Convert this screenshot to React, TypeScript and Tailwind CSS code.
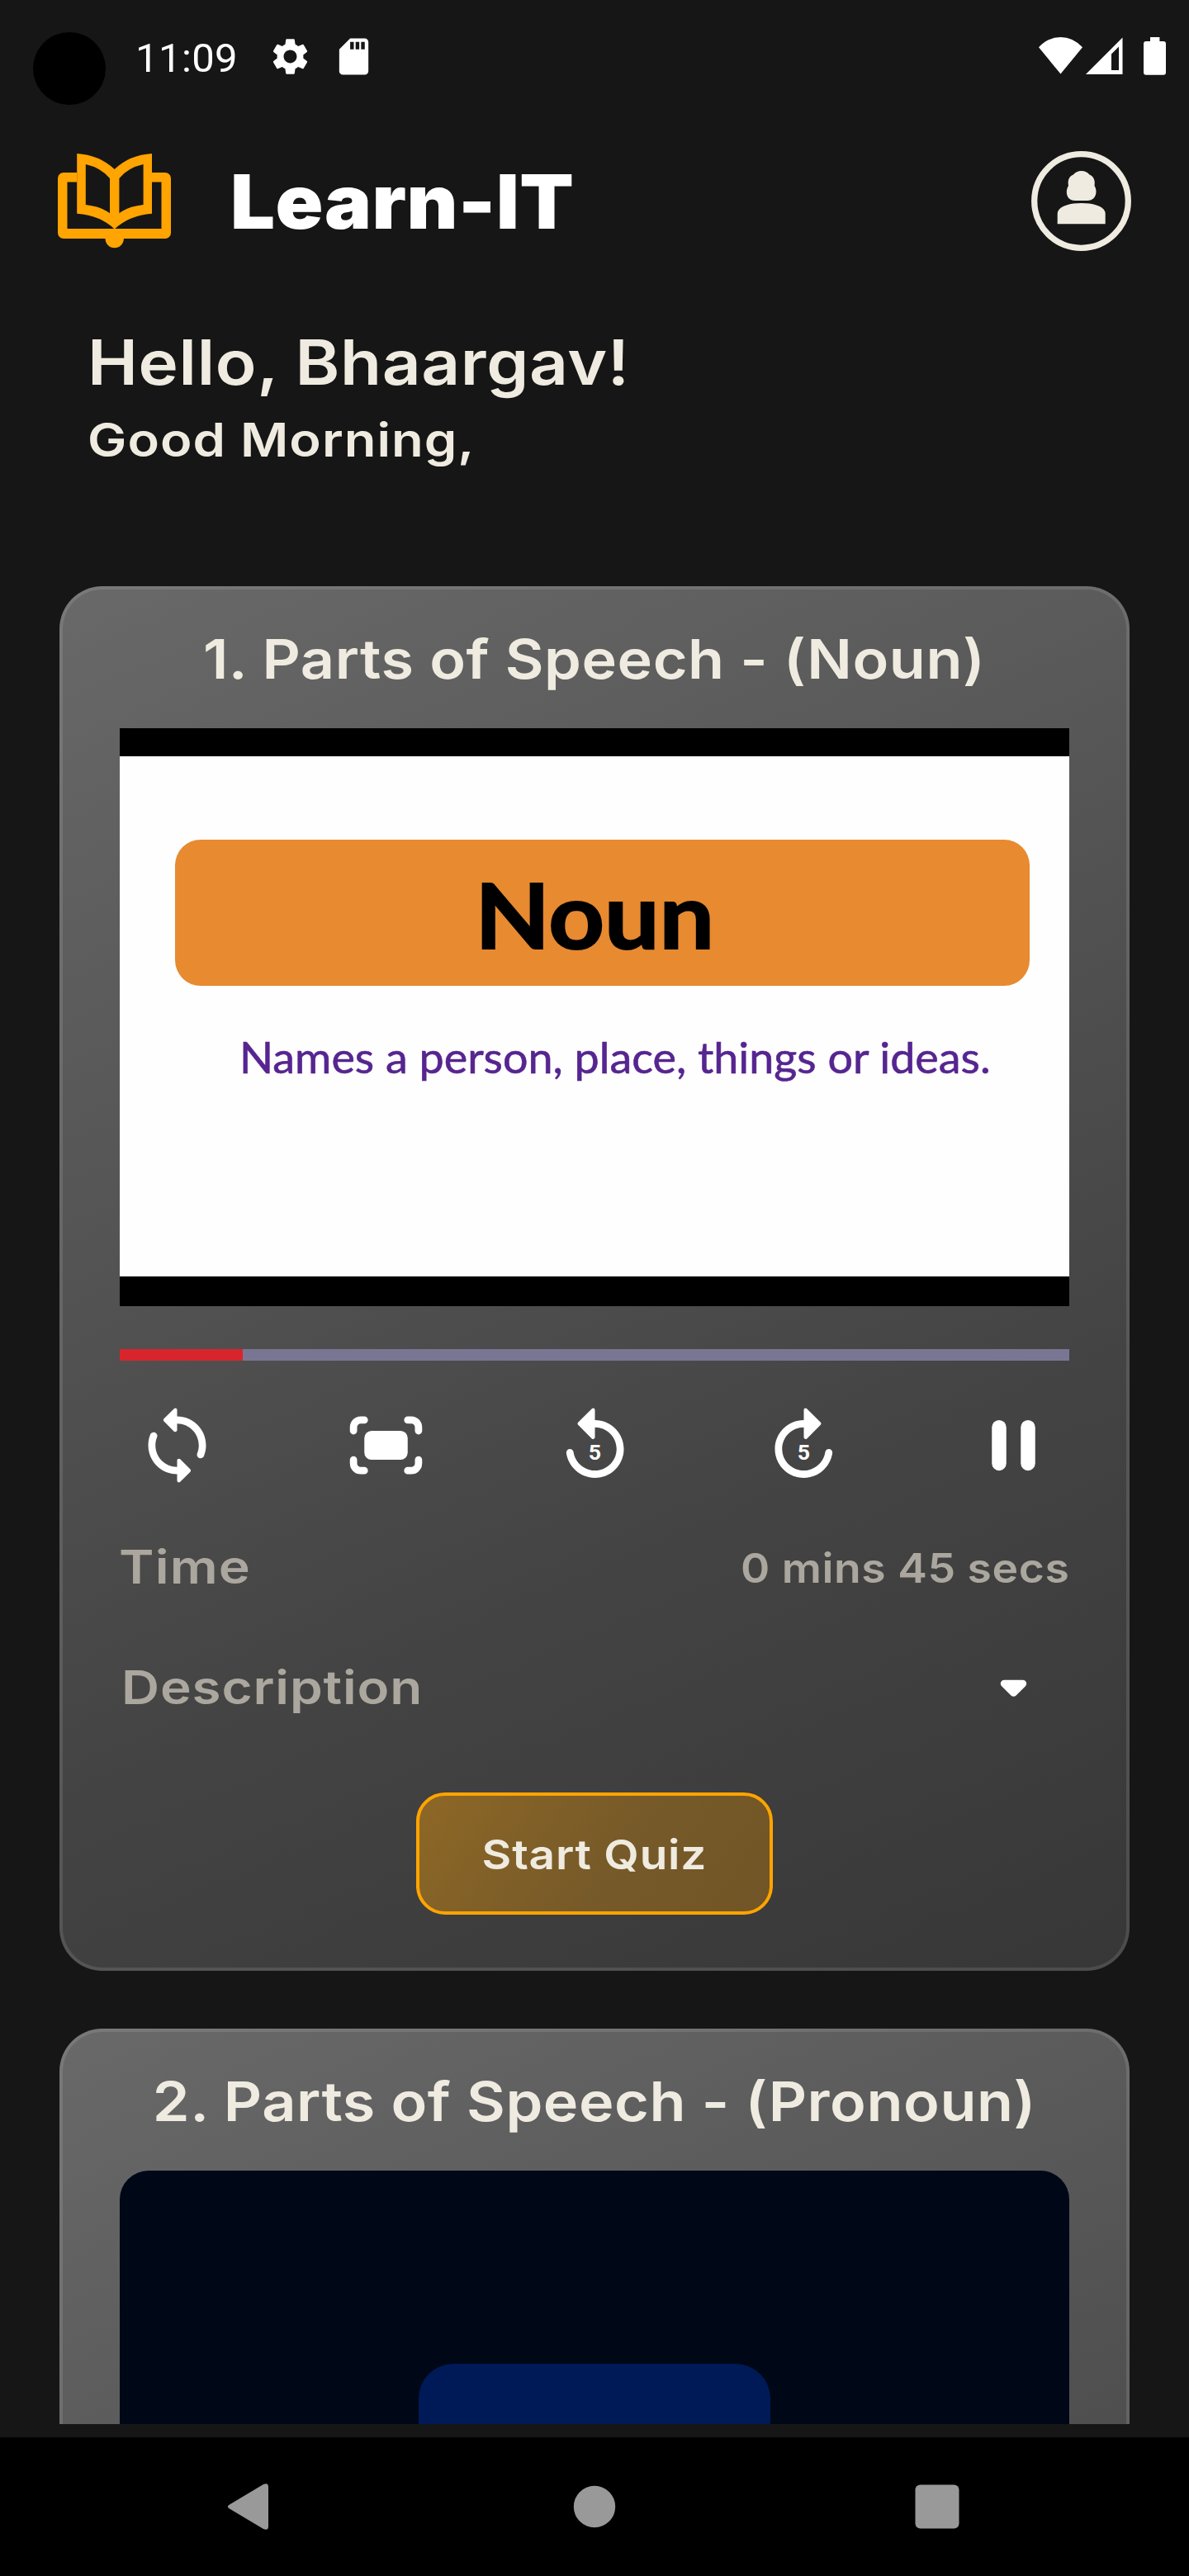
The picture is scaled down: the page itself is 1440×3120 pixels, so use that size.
import type { ReactNode } from "react";
import { MdSdCard, MdSettings } from "react-icons/md";

function StatusBar() {
  return (
    <div className="flex h-[140px] items-start pr-[28px] pl-10 text-white">
      <div className="mt-[39px] size-[88px] rounded-full bg-black" />
      <div className="mt-[46px] ml-[36px] w-[130px] font-[Roboto,sans-serif] text-[49px] leading-[49px] tracking-[0.4px] whitespace-nowrap">
        11:09
      </div>
      <MdSettings className="mt-[41.5px] ml-[30.5px] size-[53px]" />
      <MdSdCard className="mt-[41.5px] ml-6 size-[53px]" />
      <svg className="mt-[45px] ml-auto h-[45px] w-[53px]" viewBox="0 0 53 45" fill="currentColor">
        <path d="M0 12.3Q11.5 0 26.5 0T53 12.3L26.5 44.6z" />
      </svg>
      <svg className="mt-[45px] ml-[4px] h-[45px] w-[45px]" viewBox="0 0 45 45" fill="currentColor" fillRule="evenodd">
        <path d="M0 45L44.5 0.5V45zM31 20.5V40H40V11.5z" />
      </svg>
      <svg className="mt-[45px] ml-[25px] h-[46px] w-[27px]" viewBox="0 0 27 46" fill="currentColor">
        <path d="M8 0H19.4V5H24a3 3 0 0 1 3 3V42.7a3 3 0 0 1-3 3H3a3 3 0 0 1-3-3V8a3 3 0 0 1 3-3H8z" />
      </svg>
    </div>
  );
}

function Header() {
  return (
    <header className="mt-[43px] flex h-[121px] items-start px-[70px]">
      <svg className="mt-[3px] h-[115px] w-[137px] shrink-0" viewBox="0 0 137 115" fill="#ffa400" fillRule="evenodd">
        <path d="M7 23H23.2V34.5H11.5V91H125.5V34.5H114V23H130a7 7 0 0 1 7 7V96a7 7 0 0 1-7 7H79.9a11.2 11.2 0 0 1-22.4 0H7a7 7 0 0 1-7-7V30a7 7 0 0 1 7-7z" />
        <path d="M23.2 0Q50 1.5 68.7 19Q87 1.5 114 0V72.7Q86 75 68.7 91.5Q52 75 23.2 72.7zM33.8 13Q52 17 63 30V72.3Q52 64 33.8 62zM103.6 13Q85 17 74.4 30V72.3Q85 64 103.6 62z" />
      </svg>
      <h1 className="mt-[16.4px] ml-[71.5px] origin-left scale-x-[1.05] text-[91px] leading-[91px] font-black tracking-[0.5px] whitespace-nowrap text-white">
        Learn-IT
      </h1>
      <svg className="ml-auto size-[121px]" viewBox="0 0 121 121" fill="#efebe0">
        <circle cx="60.5" cy="60.5" r="56.8" fill="none" stroke="#efebe0" strokeWidth="7.3" />
        <path d="M60.7 24C65 24 68 25.5 70.5 28.5C76 31 77.5 36 76.5 42C80.5 48 79 60 68 60H53C42 60 41 48 45 42C44 36 45 31 51 28.5C53.5 25.5 56.5 24 60.7 24z" />
        <path d="M31.7 88.3V76C31.7 67 46 63 60.7 63S89.7 67 89.7 76V88.3z" />
      </svg>
    </header>
  );
}

function Greeting() {
  return (
    <section className="h-[406px] pt-[97px] pl-[106px] text-[#efebe0]">
      <p className="w-fit origin-left scale-x-[1.09] text-[75px] leading-[75px] font-semibold tracking-[0.6px] whitespace-nowrap">
        Hello, Bhaargav!
      </p>
      <p className="mt-[28.5px] w-fit origin-left scale-x-[1.13] text-[56px] leading-[56px] font-semibold tracking-[0.9px] whitespace-nowrap">
        Good Morning,
      </p>
    </section>
  );
}

function LessonCard({ title, children }: { title: string; children: ReactNode }) {
  return (
    <article className="h-[1677px] shrink-0 rounded-[52px] border-4 border-white/11 bg-[linear-gradient(157deg,#696969_0%,#444444_65%,#373737_100%)] bg-origin-border px-[69px] pt-[51px]">
      <div className="flex justify-center">
        <h2 className="scale-x-[1.09] text-[66px] leading-[66px] font-semibold tracking-[0.5px] whitespace-nowrap text-[#efebe0]">
          {title}
        </h2>
      </div>
      {children}
    </article>
  );
}

function NounVideo() {
  return (
    <div className="mt-[51px] flex h-[700px] flex-col bg-black pt-[34px] pb-[36px]">
      <div className="flex-1 bg-[#fefefe] pt-[101px] pr-[48px] pl-[67px]">
        <div className="flex h-[177px] justify-center rounded-[31px] bg-[#e78a30] pr-[18px] font-[Lato,sans-serif]">
          <span className="mt-[34px] scale-x-[1.073] text-[110px] leading-[110px] font-bold text-black [-webkit-text-stroke:2px_black]">
            Noun
          </span>
        </div>
        <p className="mt-[60px] ml-[78px] w-fit origin-left scale-x-[1.036] font-[Lato,sans-serif] text-[52px] leading-[52px] whitespace-nowrap text-[#562590] [-webkit-text-stroke:0.6px_#562590]">
          Names a person, place, things or ideas.
        </p>
      </div>
    </div>
  );
}

function ControlIcon({ children }: { children: ReactNode }) {
  return (
    <svg className="size-[105px]" viewBox="0 0 24 24" fill="white">
      {children}
    </svg>
  );
}

const REPLAY =
  "M12 5V2.21c0-.45-.54-.67-.85-.35l-3.8 3.79c-.2.2-.2.51 0 .71l3.79 3.79c.32.31.86.09.86-.36V7c3.73 0 6.68 3.42 5.86 7.29-.47 2.27-2.31 4.1-4.57 4.57-3.57.75-6.75-1.7-7.23-5.01-.07-.48-.49-.85-.98-.85-.6 0-1.08.53-1 1.13.62 4.39 4.8 7.64 9.53 6.72 3.12-.61 5.63-3.12 6.24-6.24C20.84 9.48 16.94 5 12 5z";

function SkipLabel() {
  return (
    <text x="12" y="16" fontSize="6.1" fontWeight="700" fontFamily="Roboto, sans-serif" textAnchor="middle">
      5
    </text>
  );
}

function Controls() {
  return (
    <div className="mt-[50px] flex justify-between pr-[15.5px] pl-[17px]">
      <ControlIcon>
        <path d="M12 4V2.21c0-.45-.54-.67-.85-.35l-2.8 2.79c-.2.2-.2.51 0 .71l2.79 2.79c.32.31.86.09.86-.36V6c3.31 0 6 2.69 6 6 0 .79-.15 1.56-.44 2.25-.15.36-.04.77.23 1.04.51.51 1.37.33 1.64-.34.37-.91.57-1.91.57-2.95 0-4.42-3.58-8-8-8zm0 14c-3.31 0-6-2.69-6-6 0-.79.15-1.56.44-2.25.15-.36.04-.77-.23-1.04-.51-.51-1.37-.33-1.64.34C4.2 9.96 4 10.96 4 12c0 4.42 3.58 8 8 8v1.79c0 .45.54.67.85.35l2.79-2.79c.2-.2.2-.51 0-.71l-2.79-2.79c-.31-.31-.85-.09-.85.36V18z" />
      </ControlIcon>
      <ControlIcon>
        <rect x="6" y="8" width="12" height="8" rx="2" />
        <path
          d="M3 8V7a2 2 0 0 1 2-2H6M18 5H19a2 2 0 0 1 2 2V8M21 16V17a2 2 0 0 1-2 2H18M6 19H5a2 2 0 0 1-2-2V16"
          fill="none"
          stroke="white"
          strokeWidth="2"
          strokeLinecap="round"
        />
      </ControlIcon>
      <ControlIcon>
        <path d={REPLAY} />
        <SkipLabel />
      </ControlIcon>
      <ControlIcon>
        <path d={REPLAY} transform="translate(24 0) scale(-1 1)" />
        <SkipLabel />
      </ControlIcon>
      <ControlIcon>
        <rect x="6" y="5" width="4" height="14" rx="2" />
        <rect x="14" y="5" width="4" height="14" rx="2" />
      </ControlIcon>
    </div>
  );
}

function NavBar() {
  return (
    <nav className="h-[168px] bg-black">
      <svg className="h-[168px] w-[1440px]" viewBox="0 0 1440 168" fill="#999999">
        <path d="M278 81.5L319 57Q325 54.5 325 60V108Q325 113.5 319 111L278 86.5Q273.7 84 278 81.5z" />
        <circle cx="720" cy="84" r="25.2" />
        <rect x="1108.5" y="57.5" width="53" height="53" rx="6" />
      </svg>
    </nav>
  );
}

export default function App() {
  return (
    <div className="h-[3120px] w-[1440px] overflow-hidden bg-[#161616] font-[Inter,sans-serif]">
      <StatusBar />
      <Header />
      <Greeting />
      <main className="mb-4 flex h-[2226px] flex-col gap-[70px] overflow-hidden px-[72px]">
        <LessonCard title="1. Parts of Speech - (Noun)">
          <NounVideo />
          <div className="mt-[52px] h-[14px] bg-[#797694]">
            <div className="h-full w-[149px] bg-[#d8252d]" />
          </div>
          <Controls />
          <div className="mt-[66.5px] flex h-[56px] justify-between font-semibold whitespace-nowrap text-[#aba79e]">
            <span className="-ml-px origin-left scale-x-[1.15] text-[56px] leading-[56px] tracking-[1px]">Time</span>
            <span className="mt-[4px] origin-right scale-x-[1.07] text-[50px] leading-[50px] tracking-[0.5px]">
              0 mins 45 secs
            </span>
          </div>
          <div className="mt-[90px] flex h-[56px] items-center justify-between pr-[15.5px]">
            <span className="ml-[2px] origin-left scale-x-[1.14] text-[56px] leading-[56px] font-semibold tracking-[0.75px] text-[#aba79e]">
              Description
            </span>
            <ControlIcon>
              <path d="M8.71 11.71l2.59 2.59c.39.39 1.02.39 1.41 0l2.59-2.59c.63-.63.18-1.71-.71-1.71H9.41c-.89 0-1.33 1.08-.7 1.71z" />
            </ControlIcon>
          </div>
          <div className="mt-[99.5px] flex justify-center">
            <button className="flex h-[147.5px] w-[432px] justify-center rounded-[35px] border-4 border-[#ffa400] bg-[linear-gradient(125deg,#8b6626_5%,#775a29_55%,#715526_100%)] pt-[45.5px]">
              <span className="scale-x-[1.1] text-[50px] leading-[50px] font-semibold tracking-[0.7px] text-[#efebe0]">
                Start Quiz
              </span>
            </button>
          </div>
        </LessonCard>
        <LessonCard title="2. Parts of Speech - (Pronoun)">
          <div className="mt-[51px] flex h-[700px] items-center justify-center rounded-[35px] bg-[#000717]">
            <div className="h-[233px] w-[426px] rounded-[42px] bg-[#001a57]" />
          </div>
        </LessonCard>
      </main>
      <NavBar />
    </div>
  );
}
